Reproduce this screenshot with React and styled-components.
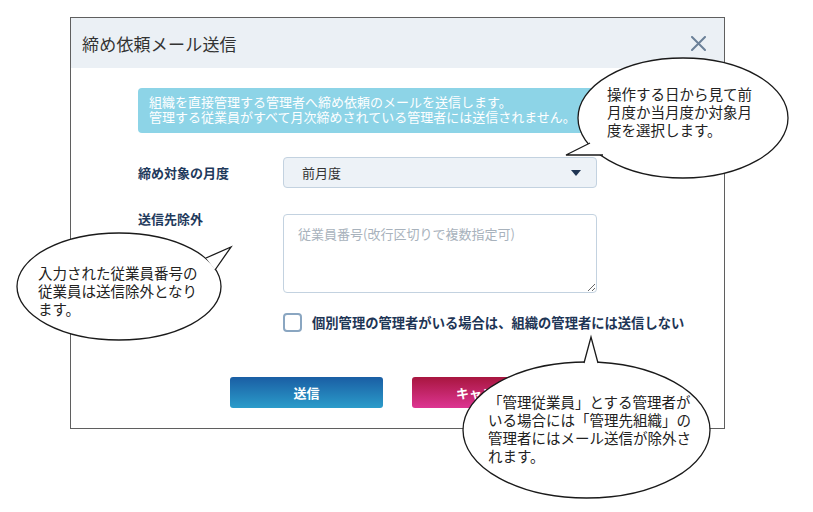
import React from "react";
import styled, { createGlobalStyle } from "styled-components";

const GlobalStyle = createGlobalStyle`
  html, body {
    margin: 0;
    padding: 0;
    background: #ffffff;
  }
  body {
    font-family: "Noto Sans CJK JP", "Noto Sans", "Liberation Sans", sans-serif;
  }
`;

export const Page = styled.div`
  position: relative;
  width: 813px;
  height: 512px;
  overflow: hidden;
  padding: 17px 0 0 70px;
  box-sizing: border-box;
`;

export const Dialog = styled.div`
  width: 655px;
  box-sizing: border-box;
  border: 1.5px solid #5f5f5f;
  background: #ffffff;
  padding-bottom: 20px;
`;

export const Header = styled.div`
  height: 50px;
  background: #ebf0f5;
  display: flex;
  align-items: center;
  justify-content: space-between;
  padding: 0 18px 0 11px;
`;

export const Title = styled.h1`
  margin: 0;
  font-size: 17px;
  font-weight: 400;
  color: #333333;
  letter-spacing: 0.2px;
`;

export const CloseButton = styled.button`
  border: none;
  background: none;
  padding: 0;
  width: 16px;
  height: 16px;
  display: flex;
  align-items: center;
  justify-content: center;
  cursor: pointer;
`;

export const Body = styled.div`
  padding: 20px 0 0 67px;
`;

export const Notice = styled.div`
  width: 518px;
  height: 45px;
  box-sizing: border-box;
  background: #8dd4e7;
  border-radius: 4px;
  padding: 6px 11px;
  color: #ffffff;
  font-size: 13px;
  line-height: 15px;
  white-space: nowrap;
  overflow: hidden;
`;

export const Row = styled.div`
  display: flex;
  align-items: ${(props) => (props.top ? "flex-start" : "center")};
  margin-top: ${(props) => props.gap}px;
`;

export const Label = styled.div`
  width: 145px;
  font-size: 13px;
  font-weight: 700;
  color: #1f3a5c;
  line-height: 16px;
  margin-top: ${(props) => (props.top ? "-3px" : "0")};
`;

export const SelectBox = styled.div`
  width: 314px;
  height: 31px;
  box-sizing: border-box;
  background: #edf2f7;
  border: 1px solid #c3d2e0;
  border-radius: 4px;
  display: flex;
  align-items: center;
  justify-content: space-between;
  padding: 0 15px 0 18px;
  font-size: 13px;
  color: #333333;
`;

export const TextArea = styled.textarea`
  width: 314px;
  height: 79px;
  box-sizing: border-box;
  border: 1px solid #c3d2e0;
  border-radius: 4px;
  padding: 9px 14px;
  font-family: inherit;
  font-size: 13px;
  color: #333333;
  resize: vertical;
  outline: none;
  &::placeholder {
    color: #a8b2bc;
  }
`;

export const CheckRow = styled.label`
  display: flex;
  align-items: center;
  margin: 20px 0 0 145px;
  cursor: pointer;
`;

export const CheckBox = styled.span`
  width: 19px;
  height: 19px;
  box-sizing: border-box;
  border: 2px solid #8aa6c1;
  border-radius: 4px;
  background: #ffffff;
  flex-shrink: 0;
`;

export const CheckText = styled.span`
  margin-left: 10px;
  font-size: 13.3px;
  font-weight: 700;
  color: #1e3555;
  white-space: nowrap;
`;

export const Buttons = styled.div`
  display: flex;
  justify-content: center;
  gap: 29px;
  margin: 45px 0 0 -67px;
`;

export const Button = styled.button`
  width: 153px;
  height: 31px;
  border: none;
  border-radius: 3px;
  color: #ffffff;
  font-family: inherit;
  font-size: 13px;
  font-weight: 700;
  cursor: pointer;
  background: ${(props) =>
    props.danger
      ? "linear-gradient(#a8163f, #dd3592)"
      : "linear-gradient(#1a5ea4, #2b9cca)"};
`;

export const Callout = styled.div`
  position: absolute;
  left: ${(props) => props.x}px;
  top: ${(props) => props.y}px;
  width: ${(props) => props.w}px;
  height: ${(props) => props.h}px;
`;

export const CalloutShape = styled.svg`
  position: absolute;
  left: 0;
  top: 0;
  overflow: visible;
`;

export const CalloutText = styled.p`
  position: absolute;
  left: ${(props) => props.tx}px;
  top: ${(props) => props.ty}px;
  margin: 0;
  font-size: 14.5px;
  line-height: 18px;
  color: #222222;
  white-space: nowrap;
`;

function Bubble({ x, y, w, h, tail, tx, ty, children }) {
  const [a, tip, b] = tail;
  return (
    <Callout x={x} y={y} w={w} h={h}>
      <CalloutShape width={w} height={h}>
        <ellipse
          cx={w / 2}
          cy={h / 2}
          rx={w / 2}
          ry={h / 2}
          fill="#ffffff"
          stroke="#1a1a1a"
          strokeWidth="1.3"
        />
        <polygon points={`${a} ${tip} ${b}`} fill="#ffffff" />
        <polyline
          points={`${a} ${tip} ${b}`}
          fill="none"
          stroke="#1a1a1a"
          strokeWidth="1.3"
          strokeLinejoin="miter"
        />
      </CalloutShape>
      <CalloutText tx={tx} ty={ty}>
        {children}
      </CalloutText>
    </Callout>
  );
}

function CloseIcon() {
  return (
    <svg width="15" height="15" viewBox="0 0 15 15">
      <path
        d="M1 1 L14 14 M14 1 L1 14"
        stroke="#6b8098"
        strokeWidth="2"
        strokeLinecap="round"
      />
    </svg>
  );
}

function Caret() {
  return (
    <svg width="10" height="6" viewBox="0 0 10 6">
      <path d="M0 0 H10 L5 6 Z" fill="#1f3553" />
    </svg>
  );
}

export default function App() {
  return (
    <>
      <GlobalStyle />
      <Page>
        <Dialog>
          <Header>
            <Title>締め依頼メール送信</Title>
            <CloseButton aria-label="閉じる">
              <CloseIcon />
            </CloseButton>
          </Header>
          <Body>
            <Notice>
              組織を直接管理する管理者へ締め依頼のメールを送信します。
              <br />
              管理する従業員がすべて月次締めされている管理者には送信されません。
            </Notice>
            <Row gap={24}>
              <Label>締め対象の月度</Label>
              <SelectBox>
                前月度
                <Caret />
              </SelectBox>
            </Row>
            <Row gap={26} top>
              <Label top>送信先除外</Label>
              <TextArea placeholder="従業員番号(改行区切りで複数指定可)" />
            </Row>
            <CheckRow>
              <CheckBox />
              <CheckText>
                個別管理の管理者がいる場合は、組織の管理者には送信しない
              </CheckText>
            </CheckRow>
            <Buttons>
              <Button>送信</Button>
              <Button danger>キャンセル</Button>
            </Buttons>
          </Body>
        </Dialog>

        <Bubble
          x={578}
          y={58}
          w={210}
          h={120}
          tail={["12,85", "-12,97", "25,97"]}
          tx={29}
          ty={27}
        >
          操作する日から見て前
          <br />
          月度か当月度か対象月
          <br />
          度を選択します。
        </Bubble>

        <Bubble
          x={17}
          y={233}
          w={204}
          h={107}
          tail={["189,25", "214,14", "198,37"]}
          tx={21}
          ty={31}
        >
          入力された従業員番号の
          <br />
          従業員は送信除外となり
          <br />
          ます。
        </Bubble>

        <Bubble
          x={463}
          y={362}
          w={247}
          h={136}
          tail={["121,1", "128,-25", "135,1"]}
          tx={25}
          ty={31}
        >
          「管理従業員」とする管理者が
          <br />
          いる場合には「管理先組織」の
          <br />
          管理者にはメール送信が除外さ
          <br />
          れます。
        </Bubble>
      </Page>
    </>
  );
}
